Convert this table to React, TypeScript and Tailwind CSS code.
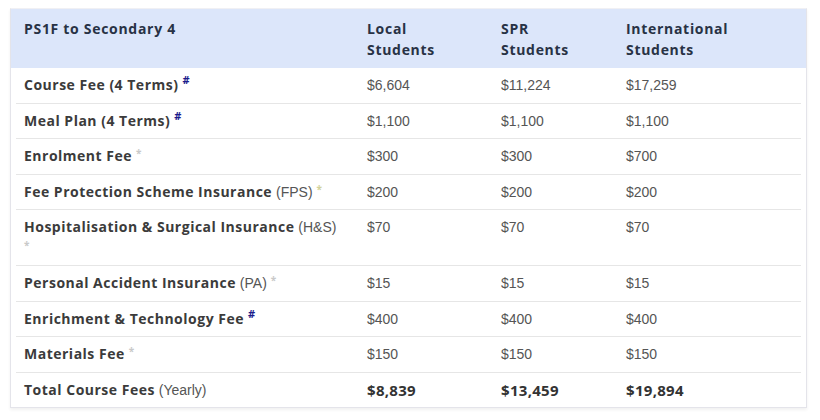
import React from "react";

const HASH = (
  <span className="inline-block leading-none ml-[4px] text-[11px] font-bold text-[#1c1c8c] relative -top-[6px]">#</span>
);
const STAR = <span className="inline-block leading-none ml-[4px] text-[10px] text-[#c9c9c9] relative -top-[4px]">*</span>;
const STARY = <span className="inline-block leading-none ml-[4px] text-[10px] text-[#d2d29a] relative -top-[4px]">*</span>;

type Row = { label: React.ReactNode; v: [string, string, string]; total?: boolean };

const sub = (t: string) => (
  <span className="font-normal tracking-normal font-['Liberation_Sans',Arial,sans-serif] text-[#555]"> {t}</span>
);

const rows: Row[] = [
  { label: <>Course Fee (4 Terms){HASH}</>, v: ["$6,604", "$11,224", "$17,259"] },
  { label: <>Meal Plan (4 Terms){HASH}</>, v: ["$1,100", "$1,100", "$1,100"] },
  { label: <>Enrolment Fee{STAR}</>, v: ["$300", "$300", "$700"] },
  { label: <>Fee Protection Scheme Insurance{sub("(FPS)")}{STARY}</>, v: ["$200", "$200", "$200"] },
  {
    label: (
      <>
        Hospitalisation &amp; Surgical Insurance{sub("(H&S)")}
        <br />
        <span className="inline-block leading-none text-[10px] text-[#c9c9c9] relative -top-[4px]">*</span>
      </>
    ),
    v: ["$70", "$70", "$70"],
  },
  { label: <>Personal Accident Insurance{sub("(PA)")}{STAR}</>, v: ["$15", "$15", "$15"] },
  { label: <>Enrichment &amp; Technology Fee{HASH}</>, v: ["$400", "$400", "$400"] },
  { label: <>Materials Fee{STAR}</>, v: ["$150", "$150", "$150"] },
  { label: <>Total Course Fees{sub("(Yearly)")}</>, v: ["$8,839", "$13,459", "$19,894"], total: true },
];

const grid = "grid grid-cols-[343px_134px_125px_182px]";

export default function App() {
  return (
    <div className="w-[820px] h-[420px] bg-white pt-[8px] pl-[10px]">
      <div className="w-[797px] border border-[#e4e4ea] border-t-[#f0f0f4] shadow-[0_2px_3px_rgba(0,0,0,0.06)] bg-white font-['Open_Sans',sans-serif]">
        <div className="bg-[#dce6fa] px-[5px]">
          <div className={`${grid} pt-[9px] pb-[8px] text-[14px] leading-[21px] font-bold text-[#283245] tracking-[0.7px]`}>
            <div className="pl-[8px]">PS1F to Secondary 4</div>
            <div className="pl-[8px]">Local<br />Students</div>
            <div className="pl-[8px]">SPR<br />Students</div>
            <div className="pl-[8px]">International<br />Students</div>
          </div>
        </div>
        <div className="px-[5px]">
          {rows.map((r, i) => (
            <div
              key={i}
              className={`${grid} py-[7px] leading-[20.5px] ${i < rows.length - 1 ? "border-b border-[#e6e6e6]" : ""}`}
            >
              <div className="pl-[8px] pr-[4px] text-[14px] font-bold text-[#3b3b3b] tracking-[0.5px]">{r.label}</div>
              {r.v.map((v, j) => (
                <div
                  key={j}
                  className={
                    r.total
                      ? "pl-[8px] text-[15px] font-bold text-[#333] tracking-[0.3px] font-['Open_Sans',sans-serif]"
                      : "pl-[8px] text-[14px] text-[#555] font-['Liberation_Sans',Arial,sans-serif]"
                  }
                >
                  {v}
                </div>
              ))}
            </div>
          ))}
        </div>
      </div>
    </div>
  );
}
